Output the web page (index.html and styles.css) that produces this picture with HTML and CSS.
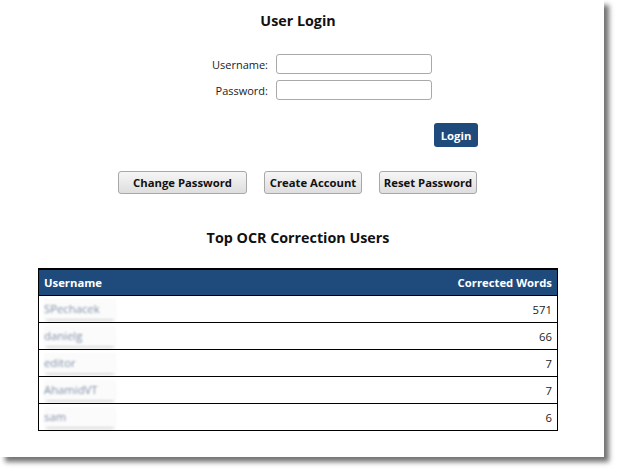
FILE: index.html
```html
<!DOCTYPE html>
<html>
<head>
<meta charset="utf-8">
<link rel="stylesheet" href="styles.css">
</head>
<body>
<div class="page">
  <h1 class="title title-login">User Login</h1>
  <div class="login-form">
    <label class="lbl">Username:</label>
    <input class="field" type="text">
    <label class="lbl">Password:</label>
    <input class="field" type="password">
  </div>
  <div class="login-row">
    <button class="btn-primary">Login</button>
  </div>
  <div class="actions">
    <button class="btn btn-change">Change Password</button>
    <button class="btn btn-create">Create Account</button>
    <button class="btn btn-reset">Reset Password</button>
  </div>
  <h2 class="title title-top">Top OCR Correction Users</h2>
  <table class="users">
    <thead>
      <tr><th class="c-user">Username</th><th class="c-num">Corrected Words</th></tr>
    </thead>
    <tbody>
      <tr><td class="c-user"><span class="blur">SPechacek</span></td><td class="c-num">571</td></tr>
      <tr><td class="c-user"><span class="blur">danielg</span></td><td class="c-num">66</td></tr>
      <tr><td class="c-user"><span class="blur">editor</span></td><td class="c-num">7</td></tr>
      <tr><td class="c-user"><span class="blur">AhamidVT</span></td><td class="c-num">7</td></tr>
      <tr><td class="c-user"><span class="blur">sam</span></td><td class="c-num">6</td></tr>
    </tbody>
  </table>
</div>
</body>
</html>
```
FILE: styles.css
```css
html, body {
  margin: 0;
  padding: 0;
  background: #ffffff;
}
body {
  font-family: "Open Sans", "Noto Sans", "DejaVu Sans", sans-serif;
  font-size: 11.3px;
  color: #111;
  padding-bottom: 17px;
}
.page {
  width: 604px;
  height: 457px;
  background: #fff;
  box-shadow: 5px 5px 5px rgba(0, 0, 0, 0.55);
  overflow: hidden;
  box-sizing: border-box;
  padding-top: 11px;
}
.title {
  margin: 0;
  padding-right: 8px;
  text-align: center;
  font-size: 14.3px;
  font-weight: 700;
  line-height: 20px;
  color: #111;
}
.login-form {
  margin: 23px 0 0 196px;
  display: grid;
  grid-template-columns: 72px 156px;
  column-gap: 8px;
  row-gap: 6px;
  align-items: center;
}
.lbl {
  text-align: right;
  font-size: 11px;
  color: #222;
}
.field {
  box-sizing: border-box;
  height: 20px;
  width: 156px;
  margin: 0;
  border: 1px solid #a9a9a9;
  border-radius: 3px;
  background: #fff;
}
.login-row {
  display: flex;
  justify-content: flex-end;
  padding-right: 126px;
  margin-top: 23px;
}
.btn-primary {
  height: 24px;
  width: 44px;
  padding: 0;
  border: none;
  border-radius: 3px;
  background: #1f4a7c;
  color: #fff;
  font-family: inherit;
  font-weight: 700;
  font-size: 11.3px;
}
.actions {
  display: flex;
  gap: 17px;
  padding-left: 118px;
  margin-top: 24px;
}
.btn {
  height: 23px;
  padding: 0;
  border: 1px solid #a8a8a8;
  border-radius: 3px;
  background: linear-gradient(#f6f6f6, #dedede);
  font-family: inherit;
  font-weight: 700;
  font-size: 11.3px;
  color: #111;
}
.btn-change { width: 129px; }
.btn-create { width: 98px; }
.btn-reset { width: 98px; }
.title-top {
  margin-top: 34px;
}
.users {
  margin: 20px 0 0 38px;
  width: 520px;
  border-collapse: collapse;
  border: 1px solid #000;
}
.users th {
  background: #1f4a7c;
  color: #fff;
  font-weight: 700;
  font-size: 11.3px;
  height: 25px;
  padding: 0 5px;
  border-top: 2px solid #000;
  border-bottom: 1px solid #000;
}
.users td {
  height: 26px;
  padding: 0 5px;
  border-bottom: 1px solid #000;
  font-size: 11.3px;
  color: #222;
}
.c-user { text-align: left; }
.c-num { text-align: right; }
.blur {
  display: inline-block;
  width: 72px;
  color: #8090a8;
  filter: blur(1px);
  box-shadow: 0 3px 3px -2px rgba(0, 0, 0, 0.25);
  background: #fbfbfb;
  padding: 2px 0 3px 0;
}
```
